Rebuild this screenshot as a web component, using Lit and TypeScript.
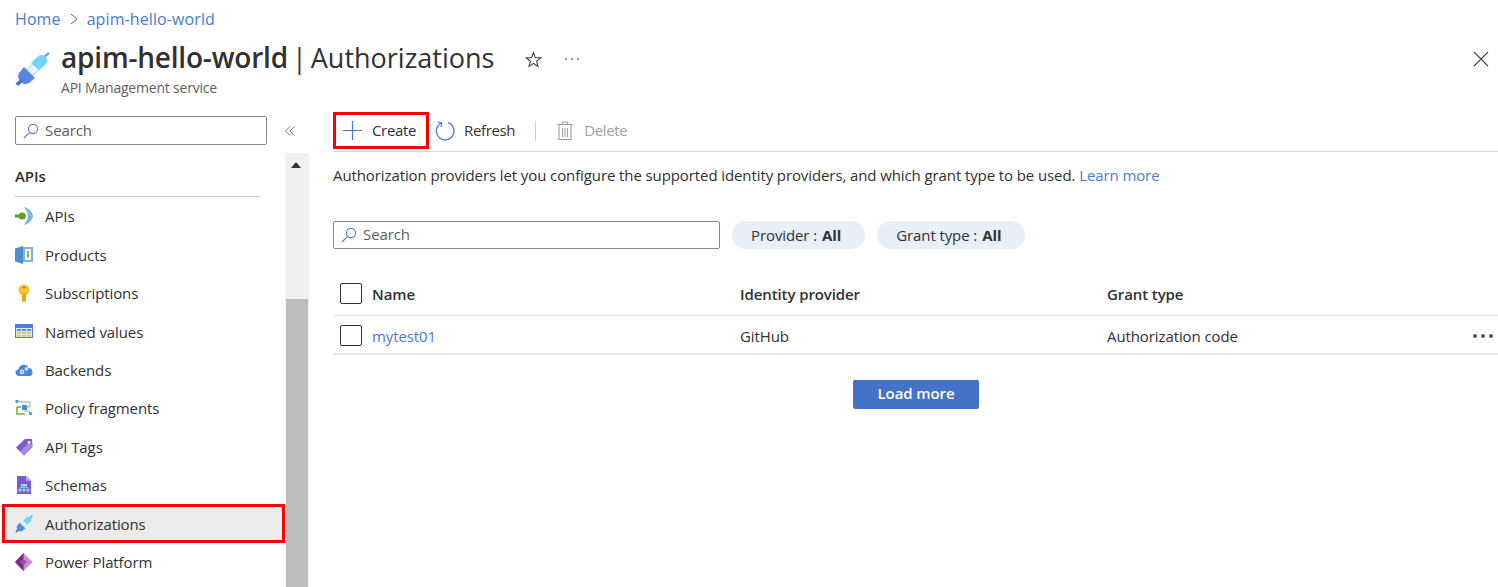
import { LitElement, html, css, svg } from 'lit';
import { customElement } from 'lit/decorators.js';

const plug = svg`
  <path d="M28 6 L34 1" stroke="#4f9be8" stroke-width="2.2" />
  <path d="M16 11 L22 5 C25 2 29 2.5 31 5 C33 8 32 11 30 13 L24 18.5 Z" fill="#78d4f5" />
  <path d="M11.5 18.5 L17.5 12.5 M17 24 L23 18" stroke="#bfe9f9" stroke-width="2" />
  <path d="M14 21.5 L20 15.5" stroke="#e6f6fc" stroke-width="4" />
  <path d="M9 15 L20 26 L14 31 C11 33 8.5 32 7 30.5 L4.5 28 C3 26 2.5 24 4 21 Z" fill="#5a85e0" />
  <path d="M6 27 L0.5 31.5 L3 34 L8 29.5 Z" fill="#3e6fd2" />
`;

const icons: Record<string, unknown> = {
  apis: svg`<path d="M9 0 C14 1 17 4.5 18 9 C17 13.5 14 17 9 18 C11 15 13 12.5 13 9 C13 5.5 11 3 9 0Z" fill="#7ab8e2"/><path d="M0 7.5h5v3H0z" fill="#5ea01f"/><circle cx="7.2" cy="9" r="3.6" fill="#5ea01f"/>`,
  products: svg`<path d="M0 2.5 L8 0 L8 18 L0 15.5Z" fill="#4f8fc7"/><path d="M8 1h10v15H8z" fill="#7fb2de"/><path d="M10 3h6v11h-6z" fill="#fff"/><path d="M13 5v5" stroke="#6aa32c" stroke-width="1.5"/><path d="M11.5 9.5h3L13 12Z" fill="#6aa32c"/>`,
  subs: svg`<circle cx="9" cy="6" r="5.6" fill="#f7c33a"/><path d="M7 9h4v8l-2 1.5L7 17Z" fill="#eba81c"/><rect x="7.6" y="2.6" width="2.8" height="1.6" fill="#a97a12"/>`,
  named: svg`<path d="M0 1h18v14H0z" fill="#4b7fdc"/><path d="M1 5h16v9H1z" fill="#d9e6f7"/><path d="M2 6h4v2H2zM7 6h4v2H7zM12 6h4v2h-4z" fill="#5b8fe0"/><path d="M2 9h4v2H2zM7 9h4v2H7zM12 9h4v2h-4zM2 12h4v1.6H2zM7 12h4v1.6H7zM12 12h4v1.6h-4z" fill="#e3c64f"/>`,
  backends: svg`<path d="M4 15 C0 15 -1 9 3.5 8.5 C4 3 12 2 13.5 7 C18 6.5 19 15 15 15Z" fill="#4b82dc"/><circle cx="7" cy="11" r="2.4" fill="#cfe1f8"/><circle cx="11.5" cy="7.8" r="1.9" fill="#cfe1f8"/><circle cx="7" cy="11" r=".8" fill="#4b82dc"/>`,
  policy: svg`<path d="M4 3h11v5H9M9 12h6" fill="none" stroke="#a0a0a0" stroke-width="1"/><path d="M2 8v7h8" fill="none" stroke="#7fb03a" stroke-width="1.6"/><path d="M2 8h4" stroke="#7fb03a" stroke-width="1.6"/><rect x="7" y="6" width="5" height="5" fill="#3f8fd8"/><circle cx="2" cy="2.5" r="1.7" fill="#4a9bd8"/><circle cx="15.5" cy="14.5" r="1.7" fill="#4a9bd8"/>`,
  tags: svg`<path d="M10 1 L17 1 L17.5 9 L9 17.5 L1 9.5Z" fill="#7d5bce"/><path d="M17.5 8 L9 17.5 L5 13.5 L15 4Z" fill="#a98be0"/><circle cx="14" cy="4.2" r="1.3" fill="#fff"/>`,
  schemas: svg`<path d="M2 0h9l5 5v13H2z" fill="#7f55d4"/><path d="M11 0l5 5h-5z" fill="#b79ae8"/><path d="M6 8h6v2.5H6zM3.5 13h3v2.5h-3zM7.5 13h3v2.5h-3zM11.5 13h3v2.5h-3z" fill="#86e0d8"/><path d="M5 13v-1.5h8V13M9 10v3" fill="none" stroke="#86e0d8" stroke-width=".8"/>`,
  power: svg`<path d="M8.5 0 L17.5 9 L8.5 18 L0 9Z" fill="#c98ccf"/><path d="M8.5 0 L0 9 L8.5 18 L8.5 12 L5 9 L8.5 6Z" fill="#7b2a82"/><path d="M8.5 6 L12 9 L8.5 12 L5 9Z" fill="#9d4ea8"/>`,
};

const search = html`<svg class="glass" viewBox="0 0 16 16"><circle cx="10" cy="6" r="4.6" fill="none" stroke="#4f7fd6" stroke-width="1.1"/><path d="M6.6 9.4 L1 15" stroke="#4f7fd6" stroke-width="1.1"/></svg>`;

const menu = [
  ['APIs', 'apis'],
  ['Products', 'products'],
  ['Subscriptions', 'subs'],
  ['Named values', 'named'],
  ['Backends', 'backends'],
  ['Policy fragments', 'policy'],
  ['API Tags', 'tags'],
  ['Schemas', 'schemas'],
  ['Authorizations', 'plug'],
  ['Power Platform', 'power'],
];

@customElement('app-root')
class AppRoot extends LitElement {
  static styles = css`
    :host {
      display: block;
      width: 1498px;
      height: 587px;
      overflow: hidden;
      background: #fff;
      color: #323130;
      font-family: "Open Sans", "Noto Sans", sans-serif;
      font-size: 15px;
      letter-spacing: -0.1px;
    }

    a { color: #4a7bd3; text-decoration: none; }

    .crumbs {
      display: flex;
      align-items: center;
      gap: 8px;
      height: 20px;
      padding: 9px 15px 0;
      font-size: 16px;
      letter-spacing: 0.1px;
    }

    .crumbs svg { width: 10px; height: 12px; }

    .head {
      display: flex;
      align-items: flex-start;
      height: 75px;
      padding: 6px 9px 0 15px;
    }

    .logo { width: 35px; height: 35px; margin-top: 17px; margin-right: 11px; }

    .titles { display: flex; flex-direction: column; }

    h1 {
      margin: 0;
      height: 44px;
      line-height: 44px;
      font-size: 27px;
      font-weight: 400;
      letter-spacing: 0;
      word-spacing: -3px;
      white-space: nowrap;
    }

    h1 b { font-size: 28px; font-weight: 600; letter-spacing: -0.2px; word-spacing: 0; }

    .sub { font-size: 14px; color: #605e5c; line-height: 20px; margin-top: -1px; letter-spacing: -0.2px; }

    .star { width: 17px; height: 17px; margin: 16px 0 0 31px; }
    .more { width: 16px; height: 4px; margin: 22px 0 0 22px; }
    .close { width: 16px; height: 16px; margin: 16px 0 0 auto; }

    .body { display: flex; height: 484px; }

    .side { display: flex; width: 309px; flex: none; }

    .nav { width: 285px; flex: none; }

    .nav-top {
      display: flex;
      align-items: center;
      width: 294px;
      padding: 6px 0 0 15px;
    }

    .box {
      display: flex;
      align-items: center;
      gap: 6px;
      height: 27px;
      border: 1px solid #8a8886;
      border-radius: 2px;
      padding-left: 7px;
      color: #605e5c;
      flex: none;
    }

    .box span, .btn span { margin-bottom: 2px; }

    .nav-top .box { width: 243px; }

    .glass { width: 16px; height: 16px; flex: none; }

    .chev { width: 12px; height: 12px; margin-left: 17px; }

    .group {
      margin: 19px 25px 0 15px;
      height: 32px;
      line-height: 24px;
      border-bottom: 1px solid #c8c6c4;
      font-weight: 600;
      color: #323130;
    }

    .item {
      display: flex;
      align-items: center;
      gap: 12px;
      height: 38.45px;
      margin-left: 2px;
      padding-left: 13px;
      box-sizing: border-box;
      white-space: nowrap;
    }

    .item svg { width: 18px; height: 18px; flex: none; }

    .item.on {
      height: 39.45px;
      margin-top: -1px;
      padding-top: 1px;
      background: #edebe9;
      outline: 3px solid #f00;
      outline-offset: -3px;
    }

    .track {
      width: 24px;
      background: #f0f0f0;
      display: flex;
      flex-direction: column;
      margin-top: 43px;
    }

    .track i {
      display: block;
      width: 0;
      height: 0;
      margin: 9px 0 0 6px;
      border: 5px solid transparent;
      border-top: 0;
      border-bottom: 6px solid #333;
    }

    .thumb { width: 22px; margin: 131px 0 2px 1px; flex: 1; background: #bdbdbd; }

    .main { flex: 1; padding: 1px 0 0 24px; min-width: 0; }

    .bar {
      display: flex;
      align-items: center;
      height: 40px;
      border-bottom: 1px solid #d8d6d4;
      letter-spacing: -0.35px;
    }

    .btn { display: flex; align-items: center; }

    .create {
      width: 96px;
      height: 37px;
      margin-top: -1px;
      box-sizing: border-box;
      border: 3px solid #f00;
      padding-left: 7px;
      gap: 10px;
      flex: none;
    }

    .create svg { width: 19px; height: 19px; }

    .refresh { margin-left: 6px; gap: 9px; }
    .refresh svg { width: 20px; height: 20px; }

    .sep { width: 1px; height: 20px; background: #d2d0ce; margin: 0 20px; }

    .delete { color: #a19f9d; gap: 10px; }
    .delete svg { width: 18px; height: 20px; }

    .desc { margin: 13px 0 0; line-height: 20px; white-space: nowrap; }

    .filters { display: flex; gap: 12px; margin-top: 36px; }
    .filters .box { width: 378px; height: 26px; }

    .pill {
      display: flex;
      align-items: center;
      height: 28px;
      padding: 0 24px 0 19px;
      border-radius: 14px;
      background: #e7f0f9;
      white-space: nowrap;
    }

    .pill b { font-weight: 700; margin-left: 5px; }

    .row {
      display: grid;
      grid-template-columns: 407px 367px 1fr 40px;
      align-items: center;
      box-sizing: border-box;
      border-bottom: 1px solid #e4e3e2;
    }

    .row.top { height: 44px; margin-top: 23px; font-weight: 600; }
    .row.cell { height: 39px; padding-top: 2px; border-bottom-width: 2px; }

    .name { display: flex; align-items: center; gap: 10px; padding-left: 7px; }

    .check {
      width: 20px;
      height: 19px;
      border: 1px solid #323130;
      border-radius: 2px;
      flex: none;
    }

    .dots { width: 20px; height: 4px; justify-self: end; margin-right: 5px; }

    .actions { display: flex; justify-content: center; margin-top: 25px; }

    .load {
      width: 126px;
      height: 29px;
      line-height: 27px;
      text-align: center;
      background: #4472c8;
      border-radius: 2px;
      color: #fff;
      font-weight: 600;
      margin-left: 1px;
    }
  `;

  renderItem([label, key]: string[]) {
    const isOn = key === 'plug';
    return html`
      <div class="item ${isOn ? 'on' : ''}">
        <svg viewBox=${isOn ? '0 0 35 35' : '0 0 18 18'}>${isOn ? plug : icons[key]}</svg>
        <span>${label}</span>
      </div>
    `;
  }

  render() {
    return html`
      <nav class="crumbs">
        <a>Home</a>
        <svg viewBox="0 0 10 12"><path d="M2 1 L8 6 L2 11" fill="none" stroke="#605e5c" /></svg>
        <a>apim-hello-world</a>
      </nav>

      <header class="head">
        <svg class="logo" viewBox="0 0 35 35">${plug}</svg>
        <div class="titles">
          <h1><b>apim-hello-world</b> | Authorizations</h1>
          <div class="sub">API Management service</div>
        </div>
        <svg class="star" viewBox="0 0 17 17"><path d="M8.5 1.6 L10.4 6.6 L15.8 6.8 L11.6 10.2 L13 15.4 L8.5 12.4 L4 15.4 L5.4 10.2 L1.2 6.8 L6.6 6.6 Z" fill="none" stroke="#444" stroke-width="1.1" /></svg>
        <svg class="more" viewBox="0 0 16 4"><g fill="#777"><circle cx="2" cy="2" r="1" /><circle cx="8" cy="2" r="1" /><circle cx="14" cy="2" r="1" /></g></svg>
        <svg class="close" viewBox="0 0 16 16"><path d="M1 1 L15 15 M15 1 L1 15" stroke="#444" stroke-width="1.1" /></svg>
      </header>

      <div class="body">
        <aside class="side">
          <div class="nav">
            <div class="nav-top">
              <div class="box">${search}<span>Search</span></div>
              <svg class="chev" viewBox="0 0 12 12"><path d="M6 1.5 L1.5 6 L6 10.5 M10.5 1.5 L6 6 L10.5 10.5" fill="none" stroke="#777" /></svg>
            </div>
            <div class="group">APIs</div>
            ${menu.map(m => this.renderItem(m))}
          </div>
          <div class="track"><i></i><div class="thumb"></div></div>
        </aside>

        <main class="main">
          <div class="bar">
            <div class="btn create">
              <svg viewBox="0 0 19 19"><path d="M9.5 0 V19 M0 9.5 H19" stroke="#4a7bd3" stroke-width="1.2" /></svg>
              <span>Create</span>
            </div>
            <div class="btn refresh">
              <svg viewBox="0 0 20 20"><path d="M6.2 2.2 A8.8 8.8 0 1 0 13 1.7" fill="none" stroke="#4a7bd3" stroke-width="1.3" /><path d="M2.6 1 L6.8 2 L6 6" fill="none" stroke="#4a7bd3" stroke-width="1.2" /></svg>
              <span>Refresh</span>
            </div>
            <div class="sep"></div>
            <div class="btn delete">
              <svg viewBox="0 0 18 20"><path d="M1 3.5 H17 M6.5 3 V1 H11.5 V3 M3 4 V18.5 H15 V4 M6.5 7 V16 M9 7 V16 M11.5 7 V16" fill="none" stroke="#a19f9d" stroke-width="1.1" /></svg>
              <span>Delete</span>
            </div>
          </div>

          <p class="desc">
            Authorization providers let you configure the supported identity providers, and which grant type to be used.
            <a>Learn more</a>
          </p>

          <div class="filters">
            <div class="box">${search}<span>Search</span></div>
            <div class="pill">Provider : <b>All</b></div>
            <div class="pill">Grant type : <b>All</b></div>
          </div>

          <div class="row top">
            <div class="name"><span class="check"></span><span>Name</span></div>
            <div>Identity provider</div>
            <div>Grant type</div>
            <div></div>
          </div>
          <div class="row cell">
            <div class="name"><span class="check"></span><a>mytest01</a></div>
            <div>GitHub</div>
            <div>Authorization code</div>
            <svg class="dots" viewBox="0 0 20 4"><g fill="#555"><circle cx="2" cy="2" r="2" /><circle cx="10" cy="2" r="2" /><circle cx="18" cy="2" r="2" /></g></svg>
          </div>

          <div class="actions"><div class="load">Load more</div></div>
        </main>
      </div>
    `;
  }
}
